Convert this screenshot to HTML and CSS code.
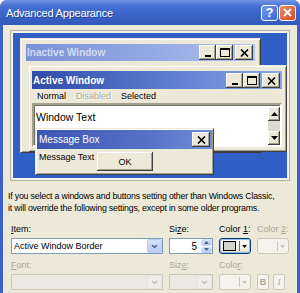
FILE: index.html
```html
<!DOCTYPE html>
<html lang="en">

<head>
    <meta charset="UTF-8">
    <meta name="viewport" content="width=device-width, initial-scale=1.0">
    <title>Advanced Appearance</title>
    <link rel="stylesheet" href="styles.css">
</head>

<body>
    <div class="dialog">
        <div class="titlebar">
            <span class="title">Advanced Appearance</span>
            <span class="cap-btn help">?</span>
            <span class="cap-btn close">
                <svg width="9" height="9" viewBox="0 0 9 9"><path d="M1 1l7 7M8 1l-7 7" stroke="#fff" stroke-width="2" /></svg>
            </span>
        </div>

        <div class="content">
            <div class="preview">
                <div class="desktop">
                    <!-- inactive window, behind -->
                    <div class="win inactive">
                        <div class="caption">
                            <span class="caption-text">Inactive Window</span>
                            <span class="cbtn"><svg width="8" height="9" viewBox="0 0 8 9"><rect x="1" y="7" width="6" height="2" /></svg></span>
                            <span class="cbtn"><svg width="10" height="9" viewBox="0 0 10 9"><rect x="0.5" y="0.5" width="9" height="8" fill="none" stroke="#000" /><rect x="0" y="0" width="10" height="2" /></svg></span>
                            <span class="cbtn last"><svg width="9" height="8" viewBox="0 0 9 8"><path d="M1 0.5l7 7M8 0.5l-7 7" stroke="#000" stroke-width="1.6" /></svg></span>
                        </div>
                    </div>

                    <!-- active window -->
                    <div class="win active">
                        <div class="caption">
                            <span class="caption-text">Active Window</span>
                            <span class="cbtn"><svg width="8" height="9" viewBox="0 0 8 9"><rect x="1" y="7" width="6" height="2" /></svg></span>
                            <span class="cbtn"><svg width="10" height="9" viewBox="0 0 10 9"><rect x="0.5" y="0.5" width="9" height="8" fill="none" stroke="#000" /><rect x="0" y="0" width="10" height="2" /></svg></span>
                            <span class="cbtn last"><svg width="9" height="8" viewBox="0 0 9 8"><path d="M1 0.5l7 7M8 0.5l-7 7" stroke="#000" stroke-width="1.6" /></svg></span>
                        </div>
                        <div class="menubar">
                            <span>Normal</span>
                            <span class="disabled">Disabled</span>
                            <span>Selected</span>
                        </div>
                        <div class="textarea">
                            <span class="wtext">Window Text</span>
                            <div class="scrollbar">
                                <span class="sb-btn"><svg width="7" height="4" viewBox="0 0 7 4"><path d="M0 4h7L3.5 0z" /></svg></span>
                                <span class="sb-track"></span>
                                <span class="sb-btn"><svg width="7" height="4" viewBox="0 0 7 4"><path d="M0 0h7L3.5 4z" /></svg></span>
                            </div>
                        </div>
                    </div>

                    <!-- message box on top -->
                    <div class="win msgbox">
                        <div class="caption">
                            <span class="caption-text">Message Box</span>
                            <span class="cbtn last"><svg width="9" height="8" viewBox="0 0 9 8"><path d="M1 0.5l7 7M8 0.5l-7 7" stroke="#000" stroke-width="1.6" /></svg></span>
                        </div>
                        <div class="msg-body">
                            <span>Message Text</span>
                            <span class="okbtn">OK</span>
                        </div>
                    </div>
                </div>
            </div>

            <p class="note">If you select a windows and buttons setting other than Windows Classic, it will override the following settings, except in some older programs.</p>

            <div class="settings">
                <div class="field">
                    <label><u>I</u>tem:</label>
                    <div class="combo">
                        <span class="combo-text">Active Window Border</span>
                        <span class="drop"><svg width="7" height="5" viewBox="0 0 7 5"><path d="M1 1l2.5 2.5L6 1" fill="none" stroke="#4d6185" stroke-width="1.5" /></svg></span>
                    </div>
                </div>
                <div class="field">
                    <label>Si<u>z</u>e:</label>
                    <div class="combo spin">
                        <span class="combo-text num">5</span>
                        <span class="spinner">
                            <span class="spin-half"><svg width="5" height="3" viewBox="0 0 5 3"><path d="M0 3h5L2.5 0z" /></svg></span>
                            <span class="spin-half"><svg width="5" height="3" viewBox="0 0 5 3"><path d="M0 0h5L2.5 3z" /></svg></span>
                        </span>
                    </div>
                </div>
                <div class="field">
                    <label>Color <u>1</u>:</label>
                    <div class="colorbtn focus">
                        <span class="swatch"></span>
                        <span class="arrow"><svg width="5" height="3" viewBox="0 0 5 3"><path d="M0 0h5L2.5 3z" /></svg></span>
                    </div>
                </div>
                <div class="field">
                    <label class="off">Color <u>2</u>:</label>
                    <div class="colorbtn off">
                        <span class="swatch none"></span>
                        <span class="arrow"><svg width="5" height="3" viewBox="0 0 5 3"><path d="M0 0h5L2.5 3z" /></svg></span>
                    </div>
                </div>

                <div class="field">
                    <label class="off"><u>F</u>ont:</label>
                    <div class="combo off">
                        <span class="combo-text"></span>
                        <span class="drop"><svg width="7" height="5" viewBox="0 0 7 5"><path d="M1 1l2.5 2.5L6 1" fill="none" stroke="#c3c3be" stroke-width="1.5" /></svg></span>
                    </div>
                </div>
                <div class="field">
                    <label class="off">Siz<u>e</u>:</label>
                    <div class="combo off">
                        <span class="combo-text"></span>
                        <span class="drop"><svg width="7" height="5" viewBox="0 0 7 5"><path d="M1 1l2.5 2.5L6 1" fill="none" stroke="#c3c3be" stroke-width="1.5" /></svg></span>
                    </div>
                </div>
                <div class="field">
                    <label class="off">Colo<u>r</u>:</label>
                    <div class="colorbtn off">
                        <span class="swatch none"></span>
                        <span class="arrow"><svg width="5" height="3" viewBox="0 0 5 3"><path d="M0 0h5L2.5 3z" /></svg></span>
                    </div>
                </div>
                <div class="field">
                    <label>&nbsp;</label>
                    <div class="style-btns">
                        <span class="stylebtn"><b>B</b></span>
                        <span class="stylebtn"><i>I</i></span>
                    </div>
                </div>
            </div>
        </div>
    </div>
</body>

</html>
```

FILE: styles.css
```css
body {
    margin: 0;
    font-family: "Liberation Sans", Arial, sans-serif;
    font-size: 9px;
    color: #000;
}

.dialog {
    width: 300px;
    height: 293px;
    display: flex;
    flex-direction: column;
    background: #3a62c8;
    border-radius: 7px 7px 0 0;
    overflow: hidden;
}

/* xp title bar */
.titlebar {
    height: 25px;
    flex-shrink: 0;
    display: flex;
    align-items: center;
    gap: 1px;
    padding: 0 4px 0 6px;
    background: linear-gradient(#7196e4, #4670d2 25%, #3a63c8 60%, #3259bb);
}

.title {
    flex: 1;
    color: #fff;
    font-size: 11px;
    letter-spacing: -0.2px;
    text-shadow: 1px 1px #22449c;
}

.cap-btn {
    width: 17px;
    height: 16px;
    box-sizing: border-box;
    border: 1px solid #fff;
    border-radius: 3px;
    display: flex;
    align-items: center;
    justify-content: center;
    color: #fff;
    font-size: 13px;
    font-weight: bold;
}

.help {
    background: linear-gradient(135deg, #6d98f0, #3c68d8);
}

.close {
    background: linear-gradient(135deg, #ec8a64, #d24a26);
}

.content {
    flex: 1;
    margin: 0 3px;
    padding-top: 5px;
    background: #ece9d8;
}

/* preview pane */
.preview {
    height: 151px;
    margin: 0 7px;
    box-sizing: border-box;
    border: 1px solid #b4b1a2;
    padding: 2px;
    background: #f3f2ea;
}

.desktop {
    position: relative;
    height: 100%;
    background: #2f5fc4;
}

.win {
    position: absolute;
    box-sizing: border-box;
    display: flex;
    flex-direction: column;
    background: #ece9d8;
    border: 1px solid;
    border-color: #ece9d8 #404040 #404040 #ece9d8;
    box-shadow: inset 1px 1px #fff, inset -1px -1px #a3a090;
}

.inactive {
    left: 7px;
    top: 5px;
    width: 241px;
    height: 115px;
    padding: 5px;
}

.active {
    left: 15px;
    top: 32px;
    width: 259px;
    height: 87px;
    padding: 5px 4px 4px 3px;
}

.msgbox {
    left: 22px;
    top: 95px;
    width: 179px;
    height: 47px;
    padding: 1px;
}

.caption {
    height: 18px;
    flex-shrink: 0;
    display: flex;
    align-items: center;
    padding: 0 2px 0 1px;
    background: linear-gradient(90deg, #2f4ca8, #5a78cc 50%, #8aa6e6);
    color: #fff;
    font-weight: bold;
    font-size: 10px;
}

.inactive .caption {
    height: 17px;
    background: linear-gradient(90deg, #7a91d8, #93a9e4 55%, #b1c2ee);
    color: #d4dcf5;
}

.msgbox .caption {
    height: 19px;
    padding-left: 2px;
    font-weight: normal;
    background: linear-gradient(90deg, #3a56b2, #5470c6 60%, #6f8cd8);
}

.caption-text {
    flex: 1;
}

.cbtn {
    width: 17px;
    height: 15px;
    box-sizing: border-box;
    display: flex;
    align-items: flex-end;
    justify-content: center;
    padding-bottom: 3px;
    background: #ece9d8;
    box-shadow: inset -1px -1px #404040, inset 1px 1px #fff, inset -2px -2px #a3a090;
}

.cbtn.last {
    margin-left: 2px;
    width: 18px;
}

.menubar {
    height: 14px;
    flex-shrink: 0;
    display: flex;
    align-items: center;
}

.menubar span {
    padding: 0 5px;
}

.disabled {
    color: #aca899;
    text-shadow: 1px 1px #fff;
}

.textarea {
    flex: 1;
    display: flex;
    background: #fff;
    border: 2px solid;
    border-color: #a3a090 #fff #fff #a3a090;
    box-shadow: inset 1px 1px #716f64;
    padding: 2px 0 0 2px;
}

.wtext {
    flex: 1;
    font-size: 10.5px;
    padding-top: 4px;
}

.scrollbar {
    width: 12px;
    display: flex;
    flex-direction: column;
    background: #f4f3ee;
}

.sb-btn {
    height: 14px;
    display: flex;
    align-items: center;
    justify-content: center;
    background: #ece9d8;
    box-shadow: inset -1px -1px #404040, inset 1px 1px #fff, inset -2px -2px #a3a090;
}

.sb-track {
    flex: 1;
    background: #dcdad0;
}

.msg-body {
    flex: 1;
    display: grid;
    grid-template-columns: 58px 56px;
    padding: 3px 0 0 2px;
}

.okbtn {
    height: 19px;
    display: flex;
    align-items: center;
    justify-content: center;
    background: #ece9d8;
    box-shadow: inset -1px -1px #404040, inset 1px 1px #fff, inset -2px -2px #a3a090;
}

/* text + settings */
.note {
    margin: 9px 18px 0 5px;
    font-size: 8.8px;
    letter-spacing: -0.2px;
    line-height: 12px;
}

.settings {
    margin: 9px 0 0 8px;
    display: grid;
    grid-template-columns: 152px 44px 32px 32px;
    column-gap: 6px;
    row-gap: 5px;
}

.field {
    display: flex;
    flex-direction: column;
}

.field label {
    line-height: 13px;
    margin-bottom: 2px;
}

.field label.off {
    color: #aca899;
}

.combo {
    height: 16px;
    box-sizing: border-box;
    display: flex;
    align-items: center;
    border: 1px solid #7f9db9;
    background: #fff;
}

.combo.off {
    border-color: #c9c7ba;
    background: #ebeae2;
}

.combo-text {
    flex: 1;
    padding-left: 2px;
}

.num {
    text-align: right;
    padding-right: 4px;
    font-size: 10px;
}

.drop {
    width: 15px;
    height: 14px;
    box-sizing: border-box;
    display: flex;
    align-items: center;
    justify-content: center;
    border: 1px solid #bccbf2;
    border-radius: 2px;
    background: linear-gradient(#d5e0fb, #bccdf6);
}

.combo.off .drop {
    border-color: #e4e3dc;
    background: #efeee8;
}

.spinner {
    width: 11px;
    height: 14px;
    display: flex;
    flex-direction: column;
    gap: 1px;
}

.spin-half {
    flex: 1;
    display: flex;
    align-items: center;
    justify-content: center;
    border-radius: 2px;
    background: linear-gradient(#d5e0fb, #bccdf6);
    fill: #4d6185;
}

.colorbtn {
    height: 16px;
    box-sizing: border-box;
    display: flex;
    align-items: center;
    padding: 0 3px;
    gap: 2px;
    border: 1px solid #003c74;
    border-radius: 3px;
    background: linear-gradient(#fff, #f0efe7 70%, #dedbcc);
}

.colorbtn.focus {
    box-shadow: inset 0 0 0 1px #9cb8e4;
}

.swatch {
    width: 15px;
    height: 8px;
    border: 1px solid #000;
    background: #d4d3c8;
    margin-right: 1px;
}

.arrow {
    height: 10px;
    display: flex;
    align-items: center;
    padding-left: 2px;
    border-left: 1px solid #716f64;
}

.colorbtn.off {
    border-color: #c9c7ba;
    background: #f4f3ee;
    fill: #c9c7ba;
}

.colorbtn.off .swatch {
    border-color: transparent;
    background: none;
}

.colorbtn.off .arrow {
    border-left-color: #c9c7ba;
}

.style-btns {
    display: flex;
    gap: 4px;
}

.stylebtn {
    width: 12px;
    height: 16px;
    box-sizing: border-box;
    display: flex;
    align-items: center;
    justify-content: center;
    border: 1px solid #c9c7ba;
    border-radius: 2px;
    background: #f4f3ee;
    color: #aca899;
}

.stylebtn i {
    font-family: "Liberation Serif", serif;
}
```
